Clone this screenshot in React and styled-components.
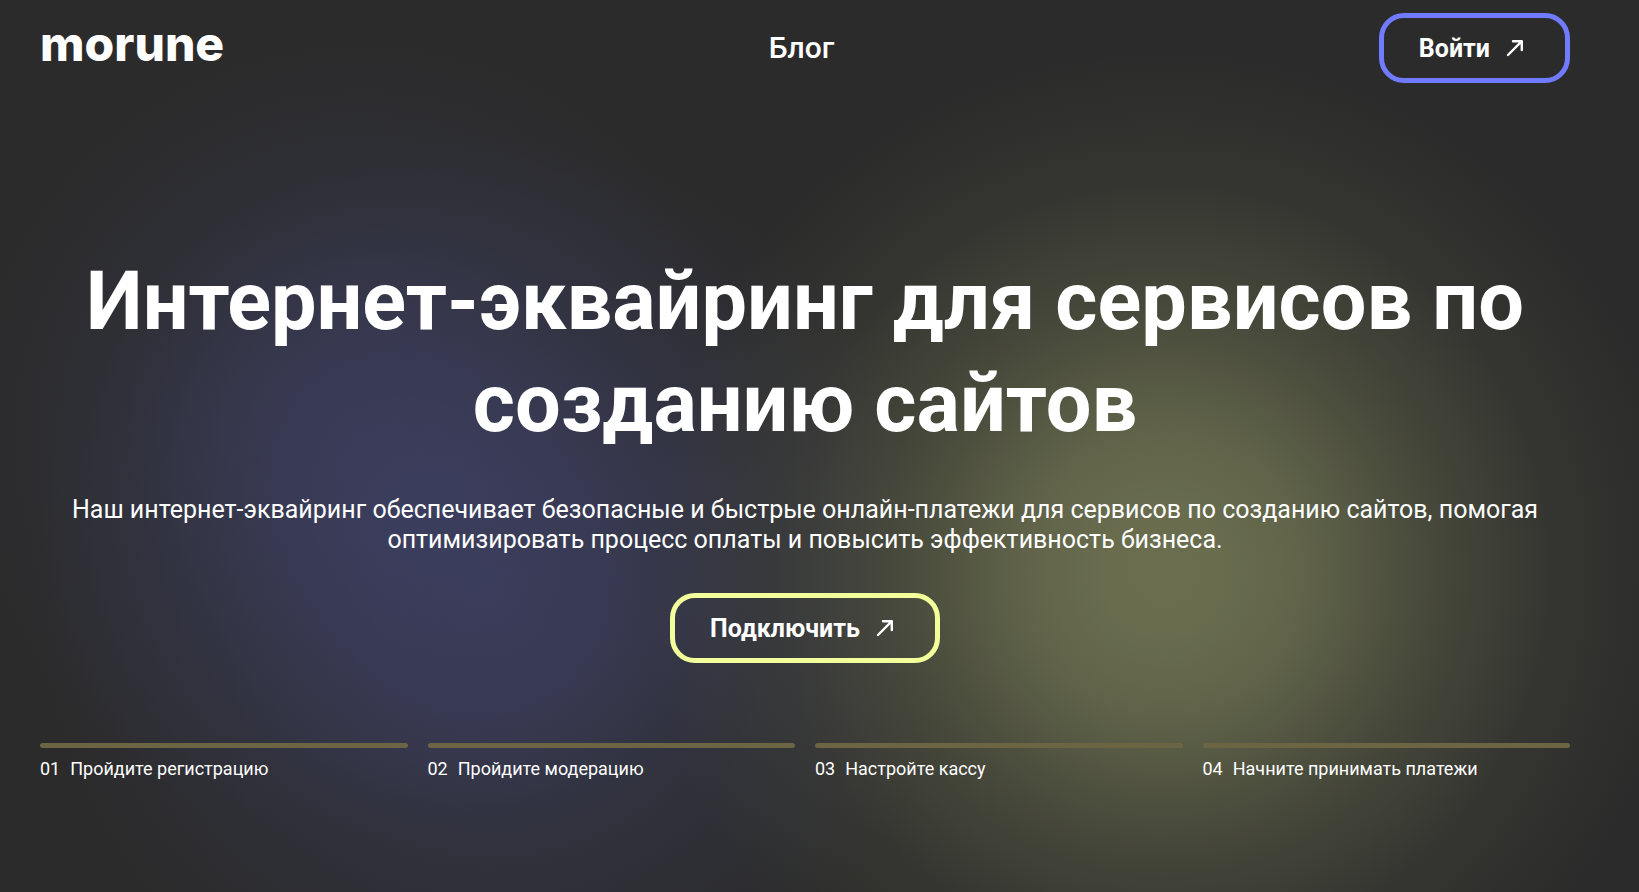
import styled, { createGlobalStyle } from "styled-components";

const steps = [
  { number: "01", label: "Пройдите регистрацию" },
  { number: "02", label: "Пройдите модерацию" },
  { number: "03", label: "Настройте кассу" },
  { number: "04", label: "Начните принимать платежи" },
];

function Arrow() {
  return (
    <svg width="30" height="30" viewBox="0 0 30 30" fill="none" stroke="#fff" strokeWidth="2.4" aria-hidden="true">
      <path d="M8 22L21.6 8.4M13 8.2H21.8V17" strokeLinecap="round" strokeLinejoin="round" />
    </svg>
  );
}

function App() {
  return (
    <Page>
      <GlobalStyle />
      <Container>
        <Header>
          <Logo href="#">morune</Logo>
          <NavLink href="#blog">Блог</NavLink>
          <Button type="button" $color="#707bff">
            Войти
            <Arrow />
          </Button>
        </Header>
        <Hero>
          <Title>Интернет-эквайринг для сервисов по созданию сайтов</Title>
          <Description>
            Наш интернет-эквайринг обеспечивает безопасные и быстрые онлайн-платежи для сервисов
            по созданию сайтов, помогая оптимизировать процесс оплаты и повысить эффективность бизнеса.
          </Description>
          <Button type="button" $color="#f3ff9a">
            Подключить
            <Arrow />
          </Button>
        </Hero>
        <Steps>
          {steps.map((step) => (
            <Step key={step.number}>
              <span>{step.number}</span>
              <span>{step.label}</span>
            </Step>
          ))}
        </Steps>
      </Container>
    </Page>
  );
}

const GlobalStyle = createGlobalStyle`
  * {
    box-sizing: border-box;
  }

  body {
    margin: 0;
    background: #2b2b2b;
    color: #fff;
    font-family: Roboto, sans-serif;
  }
`;

const Page = styled.div`
  min-height: 100vh;
  background:
    radial-gradient(circle 520px at 71% 64%, rgba(107, 111, 79, 1) 0%, rgba(107, 111, 79, 0.96) 12%, rgba(107, 111, 79, 0.82) 28%, rgba(107, 111, 79, 0.45) 50%, rgba(107, 111, 79, 0.15) 75%, rgba(107, 111, 79, 0) 100%),
    radial-gradient(circle 400px at 22% 49%, rgba(64, 67, 108, 0.55) 0%, rgba(64, 67, 108, 0.46) 25%, rgba(64, 67, 108, 0.2) 58%, rgba(64, 67, 108, 0) 100%),
    radial-gradient(circle 460px at 30% 67%, rgba(64, 67, 108, 0.65) 0%, rgba(64, 67, 108, 0.55) 25%, rgba(64, 67, 108, 0.22) 60%, rgba(64, 67, 108, 0) 100%),
    #2b2b2b;
`;

const Container = styled.div`
  max-width: 1610px;
  padding: 0 40px;
`;

const Header = styled.header`
  display: flex;
  align-items: center;
  justify-content: space-between;
  padding: 13px 0;
`;

const Logo = styled.a`
  padding-bottom: 8px;
  color: #fff;
  font-family: Inter, sans-serif;
  font-size: 48px;
  font-weight: 800;
  line-height: 60px;
  text-decoration: none;
`;

const NavLink = styled.a`
  color: #fff;
  font-size: 30px;
  font-weight: 500;
  line-height: 36px;
  text-decoration: none;
`;

const Button = styled.button`
  display: inline-flex;
  align-items: center;
  gap: 10px;
  height: 70px;
  padding: 0 35px;
  border: 5px solid ${(props) => props.$color};
  border-radius: 25px;
  background: transparent;
  color: #fff;
  font-family: inherit;
  font-size: 25px;
  font-weight: 700;
  cursor: pointer;
`;

const Hero = styled.section`
  display: flex;
  flex-direction: column;
  align-items: center;
  padding: 155px 0 80px;
  text-align: center;
`;

const Title = styled.h1`
  margin: 0;
  font-size: 81px;
  font-weight: 700;
  line-height: 102px;
`;

const Description = styled.p`
  margin: 40px 0 38px;
  font-size: 25px;
  line-height: 30px;
`;

const Steps = styled.ol`
  display: grid;
  grid-template-columns: repeat(4, 1fr);
  gap: 20px;
  margin: 0;
  padding: 0;
  list-style: none;
`;

const Step = styled.li`
  display: flex;
  flex-wrap: wrap;
  gap: 10px;
  font-size: 18px;
  line-height: 22px;

  &::before {
    content: "";
    flex: 0 0 100%;
    height: 5px;
    border-radius: 3px;
    background: #6b6543;
  }
`;

export default App;
